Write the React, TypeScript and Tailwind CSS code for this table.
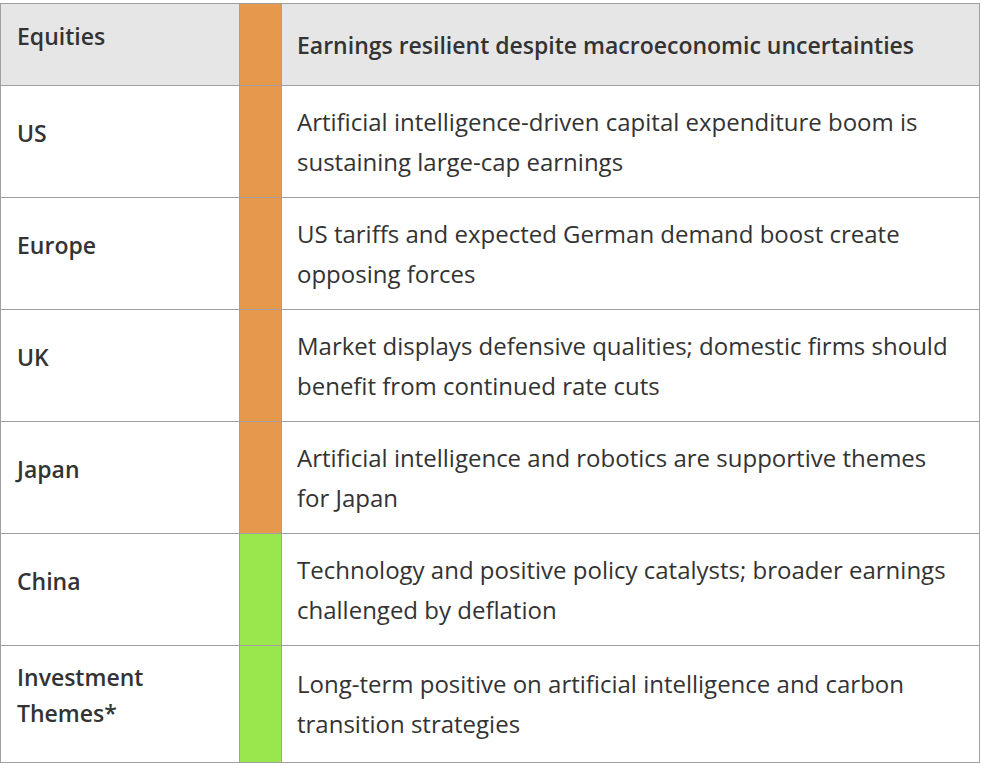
const rows = [
  { region: "US", tone: "amber", text: "Artificial intelligence-driven capital expenditure boom is sustaining large-cap earnings" },
  { region: "Europe", tone: "amber", text: "US tariffs and expected German demand boost create opposing forces" },
  { region: "UK", tone: "amber", text: "Market displays defensive qualities; domestic firms should benefit from continued rate cuts" },
  { region: "Japan", tone: "amber", text: "Artificial intelligence and robotics are supportive themes for Japan" },
  { region: "China", tone: "green", text: "Technology and positive policy catalysts; broader earnings challenged by deflation" },
  { region: "Investment Themes*", tone: "green", text: "Long-term positive on artificial intelligence and carbon transition strategies" },
];

export default function App() {
  return (
    <div className="min-h-screen bg-white pt-[3px] text-[#333333] [font-family:'Open_Sans','Liberation_Sans',sans-serif]">
      <table className="w-[980px] border-collapse border border-[#a0a0a0] table-fixed">
        <colgroup>
          <col className="w-[239px]" />
          <col className="w-[42px]" />
          <col />
        </colgroup>
        <thead>
          <tr className="h-[82px] bg-[#e6e6e6]">
            <th className="border border-[#a0a0a0] px-4 pb-[18px] text-left align-middle text-[23px] font-semibold leading-9">
              Equities
            </th>
            <td className="border border-[#a0a0a0] bg-[#e6994d]" />
            <th className="border border-[#a0a0a0] pl-[15px] pr-5 text-left align-middle text-[23px] font-semibold leading-10">
              Earnings resilient despite macroeconomic uncertainties
            </th>
          </tr>
        </thead>
        <tbody>
          {rows.map((r, i) => (
            <tr key={r.region} className={i === rows.length - 1 ? "h-[117px]" : "h-[112px]"}>
              <td className="border border-[#a0a0a0] px-4 pb-[18px] align-middle text-[23px] font-semibold leading-9">
                {r.region === "Investment Themes*" ? (
                  <>
                    Investment
                    <br />
                    Themes*
                  </>
                ) : (
                  r.region
                )}
              </td>
              <td className={`border border-[#a0a0a0] ${r.tone === "amber" ? "bg-[#e6994d]" : "bg-[#99e64d]"}`} />
              <td className="border border-[#a0a0a0] pl-[15px] pr-5 align-middle text-[24px] leading-10">
                {r.text}
              </td>
            </tr>
          ))}
        </tbody>
      </table>
    </div>
  );
}
